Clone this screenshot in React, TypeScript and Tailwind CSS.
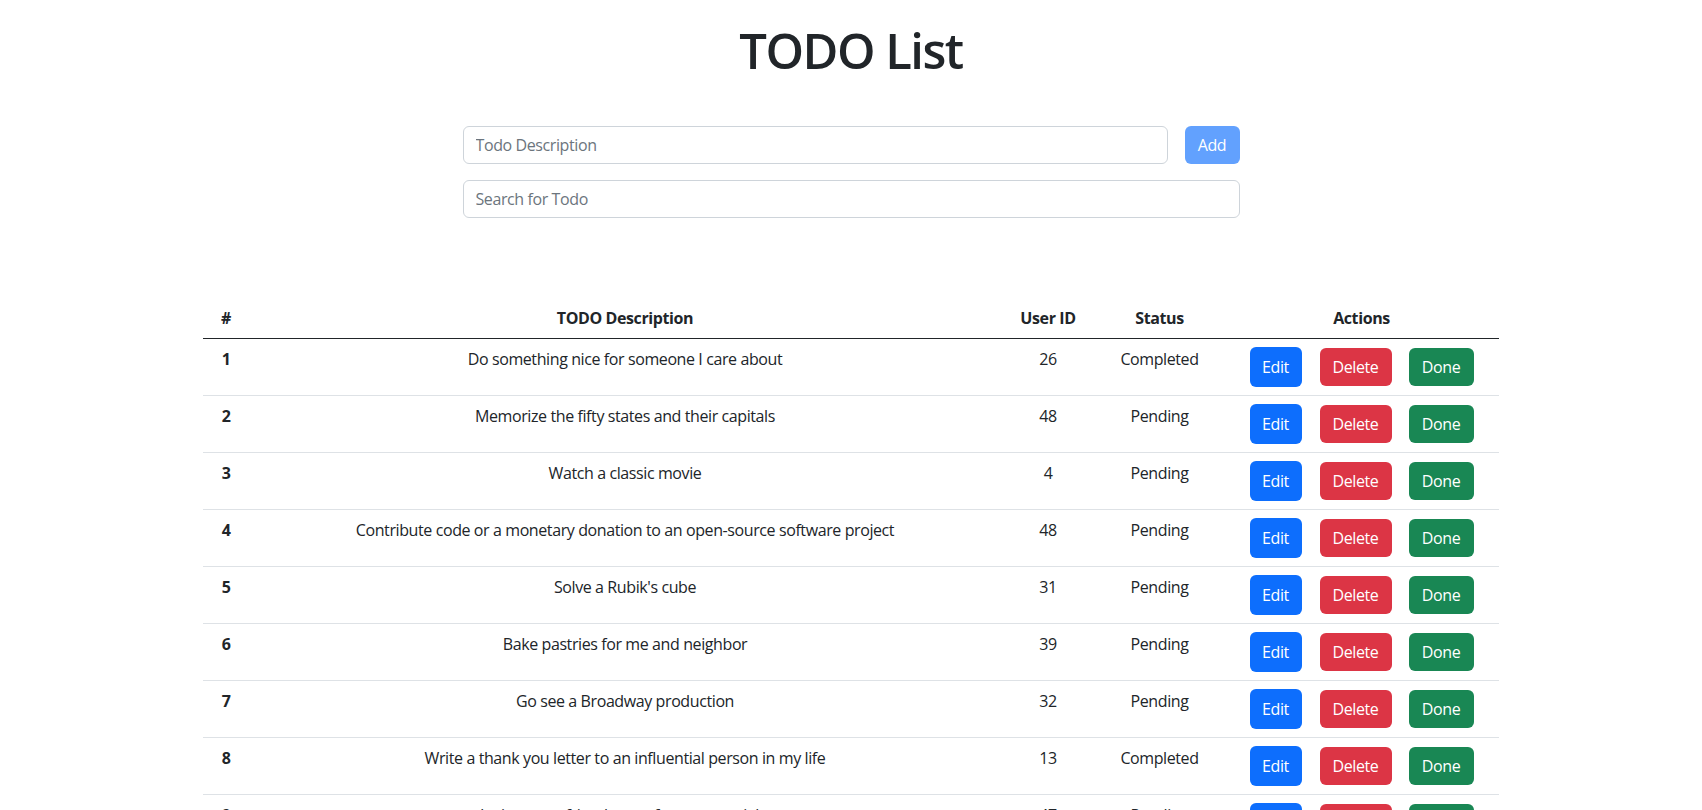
import React from "react";

const todos = [
  { id: 1, todo: "Do something nice for someone I care about", userId: 26, completed: true },
  { id: 2, todo: "Memorize the fifty states and their capitals", userId: 48, completed: false },
  { id: 3, todo: "Watch a classic movie", userId: 4, completed: false },
  { id: 4, todo: "Contribute code or a monetary donation to an open-source software project", userId: 48, completed: false },
  { id: 5, todo: "Solve a Rubik's cube", userId: 31, completed: false },
  { id: 6, todo: "Bake pastries for me and neighbor", userId: 39, completed: false },
  { id: 7, todo: "Go see a Broadway production", userId: 32, completed: false },
  { id: 8, todo: "Write a thank you letter to an influential person in my life", userId: 13, completed: true },
  { id: 9, todo: "Invite some friends over for a game night", userId: 47, completed: false },
  { id: 10, todo: "Have a football scrimmage with some friends", userId: 19, completed: false },
];

export default function App() {
  return (
    <div
      className="min-h-screen bg-white text-[#212529] text-base leading-6 tracking-[-0.4px]"
      style={{ fontFamily: '"Open Sans", "Noto Sans", sans-serif' }}
    >
      <div className="w-[1320px] mx-auto px-3 pt-[21px]">
        <h1 className="text-center text-[49px] font-semibold leading-[59px] tracking-[-1.5px]">TODO List</h1>

        <div className="w-[777px] mx-auto mt-[46px]">
          <div className="flex items-center gap-[17px]">
            <input
              type="text"
              placeholder="Todo Description"
              className="flex-1 h-[38px] border border-[#ced4da] rounded-[6px] px-3 text-base text-[#212529] placeholder:text-[#6c757d] outline-none tracking-[-0.4px]"
            />
            <button className="h-[38px] w-[55px] rounded-[6px] bg-[#62a1fe] text-white text-base">Add</button>
          </div>
          <div className="mt-4">
            <input
              type="text"
              placeholder="Search for Todo"
              className="w-full h-[38px] border border-[#ced4da] rounded-[6px] px-3 text-base text-[#212529] placeholder:text-[#6c757d] outline-none tracking-[-0.4px]"
            />
          </div>
        </div>

        <table className="w-full table-fixed border-collapse mt-[80px]">
          <colgroup>
            <col className="w-[46px]" />
            <col className="w-[752px]" />
            <col className="w-[94px]" />
            <col className="w-[129px]" />
            <col className="w-[275px]" />
          </colgroup>
          <thead>
            <tr className="border-b border-[#212529]">
              <th className="py-2 px-2 text-center font-bold">#</th>
              <th className="py-2 px-2 text-center font-bold">TODO Description</th>
              <th className="py-2 px-2 text-center font-bold">User ID</th>
              <th className="py-2 px-2 text-center font-bold">Status</th>
              <th className="py-2 px-2 text-center font-bold">Actions</th>
            </tr>
          </thead>
          <tbody>
            {todos.map((t) => (
              <tr key={t.id} className="border-b border-[#dee2e6]">
                <td className="py-2 px-2 text-center align-top font-bold">{t.id}</td>
                <td className="py-2 px-2 text-center align-top">{t.todo}</td>
                <td className="py-2 px-2 text-center align-top">{t.userId}</td>
                <td className="py-2 px-2 text-center align-top">{t.completed ? "Completed" : "Pending"}</td>
                <td className="py-2 px-2 align-top">
                  <div className="flex items-center justify-center h-[40px]">
                    <button className="h-[40px] w-[52px] rounded-[6px] bg-[#0d6efd] text-white text-base mr-[18px]">Edit</button>
                    <button className="h-[38px] w-[72px] rounded-[6px] bg-[#dc3545] text-white text-base mr-[17px]">Delete</button>
                    <button className="h-[38px] w-[65px] rounded-[6px] bg-[#198754] text-white text-base">Done</button>
                  </div>
                </td>
              </tr>
            ))}
          </tbody>
        </table>
      </div>
    </div>
  );
}
